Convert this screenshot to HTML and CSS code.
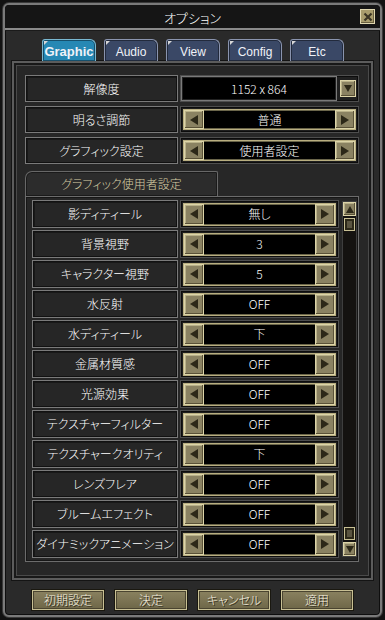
FILE: index.html
```html
<!DOCTYPE html>
<html lang="ja">
<head>
<meta charset="utf-8">
<title>オプション</title>
<link rel="stylesheet" href="styles.css">
</head>
<body>
<div class="window">
  <div class="frame">
    <div class="titlebar">
      <span></span>
      <span class="title">オプション</span>
      <span class="close"><svg width="10" height="10" viewBox="0 0 10 10"><path d="M1.5 1.5 L8.5 8.5 M8.5 1.5 L1.5 8.5" stroke="#3a3424" stroke-width="2.2"/></svg></span>
    </div>
    <div class="tabs">
      <div class="tab active">Graphic</div>
      <div class="tab">Audio</div>
      <div class="tab">View</div>
      <div class="tab">Config</div>
      <div class="tab">Etc</div>
    </div>
    <div class="main">
      <div class="row">
        <div class="label">解像度</div>
        <div class="value dropdown">
          <div class="display">1152 x 864</div>
          <span class="btn small"><i class="tri down"></i></span>
        </div>
      </div>
      <div class="row">
        <div class="label">明るさ調節</div>
        <div class="value">
          <div class="stepper">
            <span class="btn"><i class="tri left"></i></span>
            <div class="display">普通</div>
            <span class="btn"><i class="tri right"></i></span>
          </div>
        </div>
      </div>
      <div class="row">
        <div class="label">グラフィック設定</div>
        <div class="value">
          <div class="stepper">
            <span class="btn"><i class="tri left"></i></span>
            <div class="display">使用者設定</div>
            <span class="btn"><i class="tri right"></i></span>
          </div>
        </div>
      </div>

      <div class="subtab">グラフィック使用者設定</div>
      <div class="list">
        <div class="rows">
          <div class="lrow"><div class="label">影ディティール</div><div class="value"><div class="stepper"><span class="btn"><i class="tri left"></i></span><div class="display">無し</div><span class="btn"><i class="tri right"></i></span></div></div></div>
          <div class="lrow"><div class="label">背景視野</div><div class="value"><div class="stepper"><span class="btn"><i class="tri left"></i></span><div class="display">3</div><span class="btn"><i class="tri right"></i></span></div></div></div>
          <div class="lrow"><div class="label">キャラクター視野</div><div class="value"><div class="stepper"><span class="btn"><i class="tri left"></i></span><div class="display">5</div><span class="btn"><i class="tri right"></i></span></div></div></div>
          <div class="lrow"><div class="label">水反射</div><div class="value"><div class="stepper"><span class="btn"><i class="tri left"></i></span><div class="display">OFF</div><span class="btn"><i class="tri right"></i></span></div></div></div>
          <div class="lrow"><div class="label">水ディティール</div><div class="value"><div class="stepper"><span class="btn"><i class="tri left"></i></span><div class="display">下</div><span class="btn"><i class="tri right"></i></span></div></div></div>
          <div class="lrow"><div class="label">金属材質感</div><div class="value"><div class="stepper"><span class="btn"><i class="tri left"></i></span><div class="display">OFF</div><span class="btn"><i class="tri right"></i></span></div></div></div>
          <div class="lrow"><div class="label">光源効果</div><div class="value"><div class="stepper"><span class="btn"><i class="tri left"></i></span><div class="display">OFF</div><span class="btn"><i class="tri right"></i></span></div></div></div>
          <div class="lrow"><div class="label">テクスチャーフィルター</div><div class="value"><div class="stepper"><span class="btn"><i class="tri left"></i></span><div class="display">OFF</div><span class="btn"><i class="tri right"></i></span></div></div></div>
          <div class="lrow"><div class="label">テクスチャークオリティ</div><div class="value"><div class="stepper"><span class="btn"><i class="tri left"></i></span><div class="display">下</div><span class="btn"><i class="tri right"></i></span></div></div></div>
          <div class="lrow"><div class="label">レンズフレア</div><div class="value"><div class="stepper"><span class="btn"><i class="tri left"></i></span><div class="display">OFF</div><span class="btn"><i class="tri right"></i></span></div></div></div>
          <div class="lrow"><div class="label">ブルームエフェクト</div><div class="value"><div class="stepper"><span class="btn"><i class="tri left"></i></span><div class="display">OFF</div><span class="btn"><i class="tri right"></i></span></div></div></div>
          <div class="lrow"><div class="label">ダイナミックアニメーション</div><div class="value"><div class="stepper"><span class="btn"><i class="tri left"></i></span><div class="display">OFF</div><span class="btn"><i class="tri right"></i></span></div></div></div>
        </div>
        <div class="scrollbar">
          <span class="btn sb"><i class="tri up"></i></span>
          <span class="thumb"></span>
          <span class="track"></span>
          <span class="thumb"></span>
          <span class="btn sb"><i class="tri down"></i></span>
        </div>
      </div>
    </div>
    <div class="actions">
      <div class="abtn">初期設定</div>
      <div class="abtn">決定</div>
      <div class="abtn">キャンセル</div>
      <div class="abtn">適用</div>
    </div>
  </div>
</div>
</body>
</html>
```
FILE: styles.css
```css
* { box-sizing: border-box; }
body {
  margin: 0;
  background: #000;
  font-family: "Noto Sans CJK JP", "Noto Sans", sans-serif;
  font-size: 12px;
  font-weight: 300;
  font-feature-settings: "palt";
  color: #fff;
}
.window {
  width: 385px;
  height: 620px;
  padding: 3px;
  background: #121212;
}
.frame {
  height: 100%;
  border: 2px solid #7a7a7a;
  border-radius: 6px;
  background: #2a2a2a;
  box-shadow: inset 0 0 0 1px #0e0e0e, 0 0 0 1px #3a3a3a;
  display: flex;
  flex-direction: column;
}
.titlebar {
  height: 25px;
  flex: none;
  display: grid;
  grid-template-columns: 1fr auto 1fr;
  align-items: center;
  background: #151515;
  border-bottom: 2px solid #8a8a8a;
  box-shadow: 0 1px 0 #1a1a1a;
  border-radius: 4px 4px 0 0;
}
.title {
  color: #fff;
  font-size: 13px;
  line-height: 1;
  padding-top: 1px;
}
.close {
  justify-self: end;
  margin-right: 5px;
  width: 15px;
  height: 15px;
  background: #a89c6c;
  border: 1px solid #e0d8b0;
  box-shadow: inset -1px -1px 0 #6a6040;
  display: flex;
  align-items: center;
  justify-content: center;
}
.tabs {
  flex: none;
  display: flex;
  gap: 8px;
  padding-left: 37px;
  margin-top: 9px;
  height: 22px;
}
.tab {
  position: relative;
  width: 54px;
  height: 22px;
  background: #3a4866;
  border: 1px solid #8a94ae;
  border-bottom: none;
  border-radius: 3px 6px 0 0;
  box-shadow: inset 0 0 0 1px #222a3c;
  font-family: "Liberation Sans", Arial, sans-serif;
  font-weight: 400;
  font-size: 12px;
  color: #f0f2f8;
  display: flex;
  align-items: center;
  justify-content: center;
  padding-top: 2px;
}
.tab::before {
  content: "";
  position: absolute;
  left: 1px;
  top: 1px;
  border-top: 4px solid #d8d8d8;
  border-right: 4px solid transparent;
}
.tab.active {
  background: #2688b4;
  border-color: #7ab8d0;
  box-shadow: inset 0 0 0 1px #16506c;
  font-weight: bold;
  font-size: 13px;
}
.main {
  flex: none;
  margin: 0 7px;
  height: 519px;
  border: 2px solid #5c5c5c;
  box-shadow: inset 0 0 0 2px #181818, inset 0 0 0 3px #4a4a4a, 0 0 0 1px #141414;
  background: #272727;
  padding: 12px 12px 16px 11px;
  display: flex;
  flex-direction: column;
  gap: 4px;
}
.row {
  height: 27px;
  display: flex;
  gap: 2px;
}
.label {
  width: 153px;
  flex: none;
  border: 1px solid #7a7a7a;
  background: #262626;
  box-shadow: inset 0 0 0 1px #111, inset 1px 1px 0 1px #181818;
  display: flex;
  align-items: center;
  justify-content: center;
  font-size: 12px;
  line-height: 1;
  color: #fff;
  white-space: nowrap;
}
.value {
  flex: 1;
  display: flex;
  align-items: center;
  background: #1e1e1e;
  border: 1px solid #4e4e4e;
  box-shadow: inset 0 0 0 1px #0c0c0c;
  padding: 0 2px;
}
.value.dropdown {
  padding: 0 2px 0 0;
  background: #202020;
}
.dropdown .display {
  height: 100%;
  border: 1px solid #7a7a7a;
  box-shadow: inset 0 0 0 1px #222;
}
.display {
  flex: 1;
  height: 100%;
  background: #000;
  color: #fff;
  display: flex;
  align-items: center;
  justify-content: center;
  font-size: 12px;
  line-height: 1;
}
.stepper {
  flex: 1;
  height: 21px;
  display: flex;
  border: 1px solid #b8ae80;
  background: #000;
}
.stepper .display {
  border-top: 1px solid #6a654a;
  border-bottom: 1px solid #6a654a;
}
.btn {
  flex: none;
  width: 20px;
  height: 100%;
  background: #8a8262;
  border: 1px solid #dcd4a8;
  box-shadow: inset -1px -1px 0 #5a5238, inset 1px 1px 0 #b8b088;
  display: flex;
  align-items: center;
  justify-content: center;
}
.btn.small {
  width: 16px;
  height: 17px;
  margin-left: 3px;
}
.tri {
  width: 0;
  height: 0;
  display: block;
}
.tri.left {
  border-top: 5px solid transparent;
  border-bottom: 5px solid transparent;
  border-right: 8px solid #2c2818;
}
.tri.right {
  border-top: 5px solid transparent;
  border-bottom: 5px solid transparent;
  border-left: 8px solid #2c2818;
}
.tri.up {
  border-left: 4px solid transparent;
  border-right: 4px solid transparent;
  border-bottom: 7px solid #2c2818;
}
.tri.down {
  border-left: 4px solid transparent;
  border-right: 4px solid transparent;
  border-top: 7px solid #2c2818;
}
.subtab {
  flex: none;
  margin-top: 3px;
  width: 193px;
  height: 25px;
  border: 1px solid #686868;
  border-bottom: none;
  border-radius: 7px 2px 0 0;
  background: #2c2c2c;
  box-shadow: inset 0 0 0 1px #1a1a1a;
  color: #d8cfa4;
  display: flex;
  align-items: center;
  justify-content: center;
  font-size: 12px;
  line-height: 1;
}
.list {
  margin-top: -4px;
  flex: none;
  height: 366px;
  border: 1px solid #6c6c6c;
  box-shadow: inset 0 0 0 1px #161616;
  background: #262626;
  padding: 3px 1px 3px 6px;
  display: flex;
  gap: 3px;
}
.rows {
  flex: 1;
  display: flex;
  flex-direction: column;
  gap: 2px;
}
.lrow {
  height: 28px;
  display: flex;
  gap: 2px;
}
.lrow .label {
  width: 146px;
}
.lrow .value {
  padding: 0 2px;
}
.lrow .stepper {
  height: 23px;
}
.scrollbar {
  width: 15px;
  flex: none;
  display: flex;
  flex-direction: column;
  background: #141210;
  border: 1px solid #3e3e3e;
  margin: 1px 0 1px;
}
.btn.sb {
  width: 100%;
  height: 14px;
}
.thumb {
  flex: none;
  height: 13px;
  margin: 2px 1px;
  border: 1px solid #c8c094;
  background: #5a5440;
  box-shadow: inset 0 0 0 2px #2c2818;
}
.track {
  flex: 1;
}
.actions {
  flex: none;
  margin-top: 10px;
  padding-left: 27px;
  display: flex;
  gap: 11px;
}
.abtn {
  width: 72px;
  height: 20px;
  background: linear-gradient(#8a8260, #6e6748);
  border: 1px solid #c8c094;
  box-shadow: inset 0 0 0 1px #4a4430, 0 0 0 1px #1a1810;
  color: #f6f2e0;
  text-shadow: 1px 1px 0 #2a2618;
  display: flex;
  align-items: center;
  justify-content: center;
  font-size: 12px;
  line-height: 1;
}
```
